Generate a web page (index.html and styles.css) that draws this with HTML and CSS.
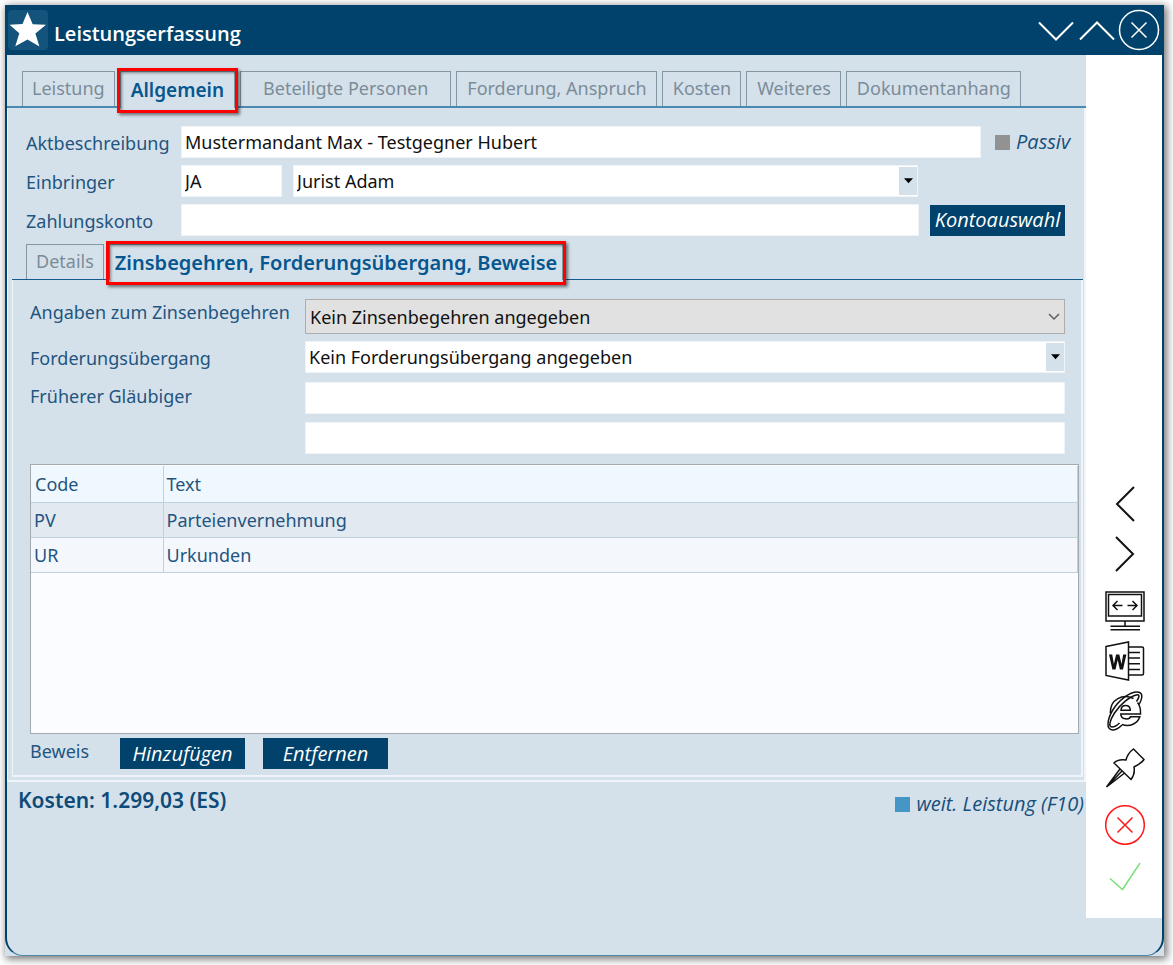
FILE: index.html
```html
<!DOCTYPE html>
<html lang="de">
<head>
<meta charset="utf-8">
<title>Leistungserfassung</title>
<link rel="stylesheet" href="styles.css">
</head>
<body>
<div class="window">
  <div class="frame">
    <header class="titlebar">
      <span class="star"><svg viewBox="0 0 40 40"><path d="M19.500 2l5.200 12.200 13.300.6-10.600 8.800 4 13-11.900-7-12.200 6.600 4-13L1.500 14.800l13-.8z" fill="#fff"/></svg></span>
      <h1 class="title">Leistungserfassung</h1>
      <div class="controls">
        <button class="ctl" aria-label="Minimieren"><svg viewBox="0 0 42 42"><path d="M5 13.500l17 17 17-17"/></svg></button>
        <button class="ctl" aria-label="Maximieren"><svg viewBox="0 0 42 42"><path d="M4 30.500l17-17 17 17"/></svg></button>
        <button class="ctl" aria-label="Schließen"><svg viewBox="0 0 42 42"><circle cx="21" cy="21" r="19.500"/><path class="thin" d="M13.500 13.500l15 15M28.500 13.500l-15 15"/></svg></button>
      </div>
    </header>
    <div class="content">
      <main class="main">
        <nav class="tabs">
          <button class="tab">Leistung</button>
          <button class="tab tab-active">Allgemein</button>
          <button class="tab tab-wide">Beteiligte Personen</button>
          <button class="tab">Forderung, Anspruch</button>
          <button class="tab">Kosten</button>
          <button class="tab">Weiteres</button>
          <button class="tab">Dokumentanhang</button>
        </nav>
        <section class="panel">
          <div class="rows">
            <div class="row">
              <label class="label" for="akt">Aktbeschreibung</label>
              <input class="field" id="akt" type="text" value="Mustermandant Max - Testgegner Hubert">
              <label class="check check-passive"><input class="box" type="checkbox">Passiv</label>
            </div>
            <div class="row row-short">
              <label class="label" for="einb">Einbringer</label>
              <input class="field field-code" id="einb" type="text" value="JA">
              <span class="combo"><select class="field" aria-label="Name des Einbringers"><option>Jurist Adam</option></select><span class="drop"><svg viewBox="0 0 10 6"><path d="M0 0h10L5 5.500z"/></svg></span></span>
            </div>
            <div class="row row-account">
              <label class="label" for="konto">Zahlungskonto</label>
              <input class="field" id="konto" type="text">
              <button class="action action-account">Kontoauswahl</button>
            </div>
          </div>
          <div class="inner">
            <nav class="tabs tabs-inner">
              <button class="tab">Details</button>
              <button class="tab tab-active">Zinsbegehren, Forderungsübergang, Beweise</button>
            </nav>
            <div class="details">
              <div class="form">
                <label class="label label-top" for="zins">Angaben zum Zinsenbegehren</label>
                <span class="combo combo-grey"><select class="field" id="zins"><option>Kein Zinsenbegehren angegeben</option></select><span class="drop"><svg viewBox="0 0 12 8"><path d="M1 1l5 5 5-5"/></svg></span></span>
                <label class="label" for="uebergang">Forderungsübergang</label>
                <span class="combo"><select class="field" id="uebergang"><option>Kein Forderungsübergang angegeben</option></select><span class="drop"><svg viewBox="0 0 10 6"><path d="M0 0h10L5 5.500z"/></svg></span></span>
                <label class="label label-creditor" for="frueher">Früherer Gläubiger</label>
                <div class="stack">
                  <input class="field" id="frueher" type="text">
                  <input class="field" type="text" aria-label="Früherer Gläubiger, zweite Zeile">
                </div>
              </div>
              <div class="grid">
                <table class="table">
                  <thead><tr><th class="code">Code</th><th>Text</th></tr></thead>
                  <tbody>
                    <tr class="alt"><td>PV</td><td>Parteienvernehmung</td></tr>
                    <tr><td>UR</td><td>Urkunden</td></tr>
                  </tbody>
                </table>
              </div>
              <div class="proof">
                <span class="proof-label">Beweis</span>
                <button class="action">Hinzufügen</button>
                <button class="action">Entfernen</button>
              </div>
            </div>
          </div>
        </section>
        <footer class="footer">
          <strong class="costs">Kosten: 1.299,03 (ES)</strong>
          <label class="check"><input class="box box-blue" type="checkbox">weit. Leistung (F10)</label>
        </footer>
      </main>
      <aside class="side">
        <div class="group">
          <button class="tool" aria-label="Zurück"><svg viewBox="0 0 40 40"><path stroke-width="2" d="M29 3L12 20l17 17"/></svg></button>
          <button class="tool" aria-label="Weiter"><svg viewBox="0 0 40 40"><path stroke-width="2" d="M11 3l17 17-17 17"/></svg></button>
        </div>
        <div class="group">
          <button class="tool" aria-label="Fenster"><svg viewBox="0 0 40 40"><path d="M1 1h38v29H1zM3.500 3.500h33v21.500h-33zM20 30v5M5.500 35.300h29.500M5.500 38.700h29.500"/><path d="M17.500 14.500H8M12.500 10L8 14.500l4.500 4.500M22.500 14.500H32M27.500 10l4.500 4.500-4.500 4.500"/></svg></button>
          <button class="tool" aria-label="Word"><svg viewBox="0 0 40 40"><path d="M1 5.500L23.500 1v38L1 34.500zM23.500 6H37q1.500 0 1.500 1.500v25Q38.500 34 37 34H23.500M24 11.500h11M24 17h11M24 22.800h11M24 28.500h11"/><path fill="#111" stroke="none" d="M4 13.500h3.200l1.700 9.500 2.200-9.500h3.200l2.200 9.500 1.700-9.500h3.200L18 28.500h-3.100L12.700 19l-2.200 9.500H7.400z"/></svg></button>
          <button class="tool" aria-label="Internet Explorer"><svg viewBox="0 0 40 40"><path d="M28.500 7.500C18 2.500 5 8 5.300 22M32.500 11.500c2.500 3 3.300 6.500 3 11.500H15.800c0 6 8.700 6 9.700 2.700h9.300C32.500 32.500 25 36.300 17 33.500M16 19.300c.3-6.300 9-6.300 9.300 0z"/><path d="M34 13.500C38.500 5.500 37.500 1 32 1 25 1 14 8.500 7.500 19.500 2 29 1 38.800 7.500 39c3 0 6.500-2 9.500-5M31.500 10.500C35 5 34.500 3.300 31.500 4 24.500 5.500 15 13.500 9.500 22 5 29 3 36 7 36c2 0 5-1.500 7.500-4"/></svg></button>
        </div>
        <div class="group">
          <button class="tool" aria-label="Anheften"><svg viewBox="0 0 40 40"><path d="M28.500 1L39 11.500c-2 3-6 5.500-10 7.500.8 4.500-.5 9.500-3 12.500L9 15c3-3.500 7.500-3.600 12-3C22 8 25 3.500 28.500 1zM15 21L1.500 39 19 25.500M17 23L1.500 39"/></svg></button>
        </div>
        <div class="group">
          <button class="tool tool-red" aria-label="Abbrechen"><svg viewBox="0 0 40 40"><circle cx="20" cy="20" r="19.300"/><path d="M12.500 12.500l15 15M27.500 12.500l-15 15"/></svg></button>
          <button class="tool tool-green" aria-label="Bestätigen"><svg viewBox="0 0 40 40"><path d="M5 23.500l12.500 11L35 8"/></svg></button>
        </div>
      </aside>
    </div>
  </div>
</div>
</body>
</html>
```
FILE: styles.css
```css
* { box-sizing: border-box; }
body {
  margin: 0;
  padding: 5px 9px 9px 5px;
  background: #fff;
  color: #1f5580;
  font: 18px/26px "Noto Sans", "Open Sans", sans-serif;
}
button, input, select { font: inherit; color: inherit; margin: 0; border-radius: 0; }
button { padding: 0; border: 0; background: none; white-space: nowrap; }
svg { display: block; fill: none; }

.window { background: #d5e1ea; box-shadow: 2px 2px 8px 1px rgba(0, 0, 0, .55); }
.frame {
  display: flex;
  flex-direction: column;
  min-height: calc(100vh - 14px);
  border: 2px solid #00426b;
  border-top: 0;
  border-bottom: 1px solid #4d85a8;
  border-radius: 0 0 18px 18px;
}

.titlebar { display: flex; align-items: center; height: 50px; background: #00426b; padding: 0 2px 0 1px; }
.star { width: 40px; height: 40px; border-radius: 4px; background: #14537c; }
.title { flex: 1; margin: 8px 0 0 6px; color: #fff; font-family: "Open Sans", sans-serif; font-size: 20px; font-weight: 600; }
.controls { display: flex; }
.ctl { width: 42px; height: 42px; }
.ctl svg { width: 42px; height: 42px; stroke: #fff; stroke-width: 2; }
.ctl circle, .ctl .thin { stroke-width: 1.500; }

.content { display: flex; flex: 1; }
.main { flex: 1; min-width: 0; padding-top: 16px; }

.tabs { display: flex; gap: 5px; height: 37px; padding-left: 15px; border-bottom: 2px solid #4a89b2; }
.tab { height: 35px; padding: 0 9px 2px; border: 1px solid #8496a2; border-bottom: 0; color: #7b8c99; }
.tab-wide { padding: 0 22px 2px; }
.tab-wide ~ .tab { padding: 0 9px 2px 10px; }
.tab-active { position: relative; height: 37px; padding: 0 10px; background: #d5e1ea; color: #06568f; font-size: 19px; font-weight: 600; }
.tab-active::after {
  content: "";
  position: absolute;
  inset: -4px -4px -5px -4px;
  border: 3px solid #f00;
  box-shadow: 2px 2px 3px rgba(0, 0, 0, .5), inset 2px 2px 3px rgba(0, 0, 0, .4);
}

.panel { padding: 18px 1px 3px 4px; border: solid #eef4f9; border-width: 0 2px 2px 1px; }
.rows { display: flex; flex-direction: column; gap: 7px; padding-left: 14px; }
.row { display: flex; align-items: center; padding-right: 102px; }
.row-short { padding-right: 165px; }
.row-account { padding-right: 18px; }
.row .label { width: 155px; flex: none; }
.label { padding-top: 2px; white-space: nowrap; }
.field {
  display: block;
  flex: 1;
  width: 100%;
  min-width: 0;
  height: 32px;
  padding: 0 3px;
  border: 1px solid #edf3f7;
  background: #fff;
  color: #111;
  outline: 0;
}
.field-code { flex: none; width: 101px; margin-right: 11px; }
select.field { appearance: none; }
.row .check { margin-right: -91px; width: 91px; padding-left: 14px; }
.check { display: flex; align-items: center; gap: 6px; color: #174f7c; white-space: nowrap; }
.check, .action { font-family: "Open Sans", sans-serif; font-size: 20px; font-style: italic; }
.box { appearance: none; flex: none; width: 15px; height: 15px; background: #929292; }
.box-blue { background: #4595c7; }
.combo { position: relative; display: block; flex: 1; }
.drop {
  position: absolute;
  top: 2px;
  right: 1px;
  bottom: 2px;
  width: 18px;
  display: grid;
  place-items: center;
  background: #d5e1ea;
  pointer-events: none;
}
.drop svg { width: 9px; height: 6px; fill: #000; }
.combo-grey .field { height: 35px; padding: 0 4px; border-color: #adadad; background: #e1e1e1; }
.combo-grey .drop { background: none; right: 2px; }
.combo-grey .drop svg { width: 12px; height: 8px; fill: none; stroke: #606060; stroke-width: 1.500; }
.action { width: 125px; height: 31px; background: #00426b; color: #fff; }
.action-account { width: 135px; margin-left: 11px; }

.inner { margin-top: 8px; }
.tabs-inner { height: 36px; padding-left: 14px; border-bottom: 1px solid #155a8c; }
.tabs-inner .tab-active { height: 36px; padding: 0 5px; font-size: 20px; }
.details { padding: 19px 2px 6px 17px; border: solid #eef4f9; border-width: 0 2px 2px 1px; }
.form { display: grid; grid-template-columns: 275px 1fr; row-gap: 7px; padding-right: 14px; align-items: center; }
.label-top { align-self: start; padding-top: 0; }
.label-creditor { align-self: start; padding-top: 3px; }
.stack { display: flex; flex-direction: column; gap: 8px; padding-top: 2px; }
.stack .field { flex: none; }
.grid { height: 270px; margin-top: 10px; border: 1px solid #a3a9ad; background: #fbfcff; padding-top: 1px; }
.table { width: 100%; border-collapse: collapse; table-layout: fixed; }
.table th, .table td { height: 35px; padding: 0 3px; text-align: left; font-weight: 400; border: 1px solid #bed2de; border-left: 0; }
.table th { background: #f0f8ff; border-top: 0; height: 36px; }
.table td { background: #f4f8fc; }
.table .alt td { background: #e2e9f0; }
.table .code { width: 132px; padding-left: 4px; }
.proof { display: flex; gap: 18px; margin-top: 4px; }
.proof-label { width: 72px; }

.footer { display: flex; justify-content: space-between; padding: 5px 2px 0 11px; }
.costs { font-size: 21px; font-weight: 600; color: #0f4b78; }
.footer .check { padding-top: 4px; }

.side {
  display: flex;
  flex-direction: column;
  justify-content: flex-end;
  gap: 17px;
  width: 76px;
  margin-bottom: 37px;
  padding: 16px 0 23px 2px;
  background: #fff;
}
.group { display: flex; flex-direction: column; align-items: center; gap: 10px; }
.tool { width: 40px; height: 40px; }
.tool svg { width: 40px; height: 40px; stroke: #111; stroke-width: 1.500; }
.tool-red svg { stroke: #ff1a1a; }
.tool-green svg { stroke: #7be07b; }
```
